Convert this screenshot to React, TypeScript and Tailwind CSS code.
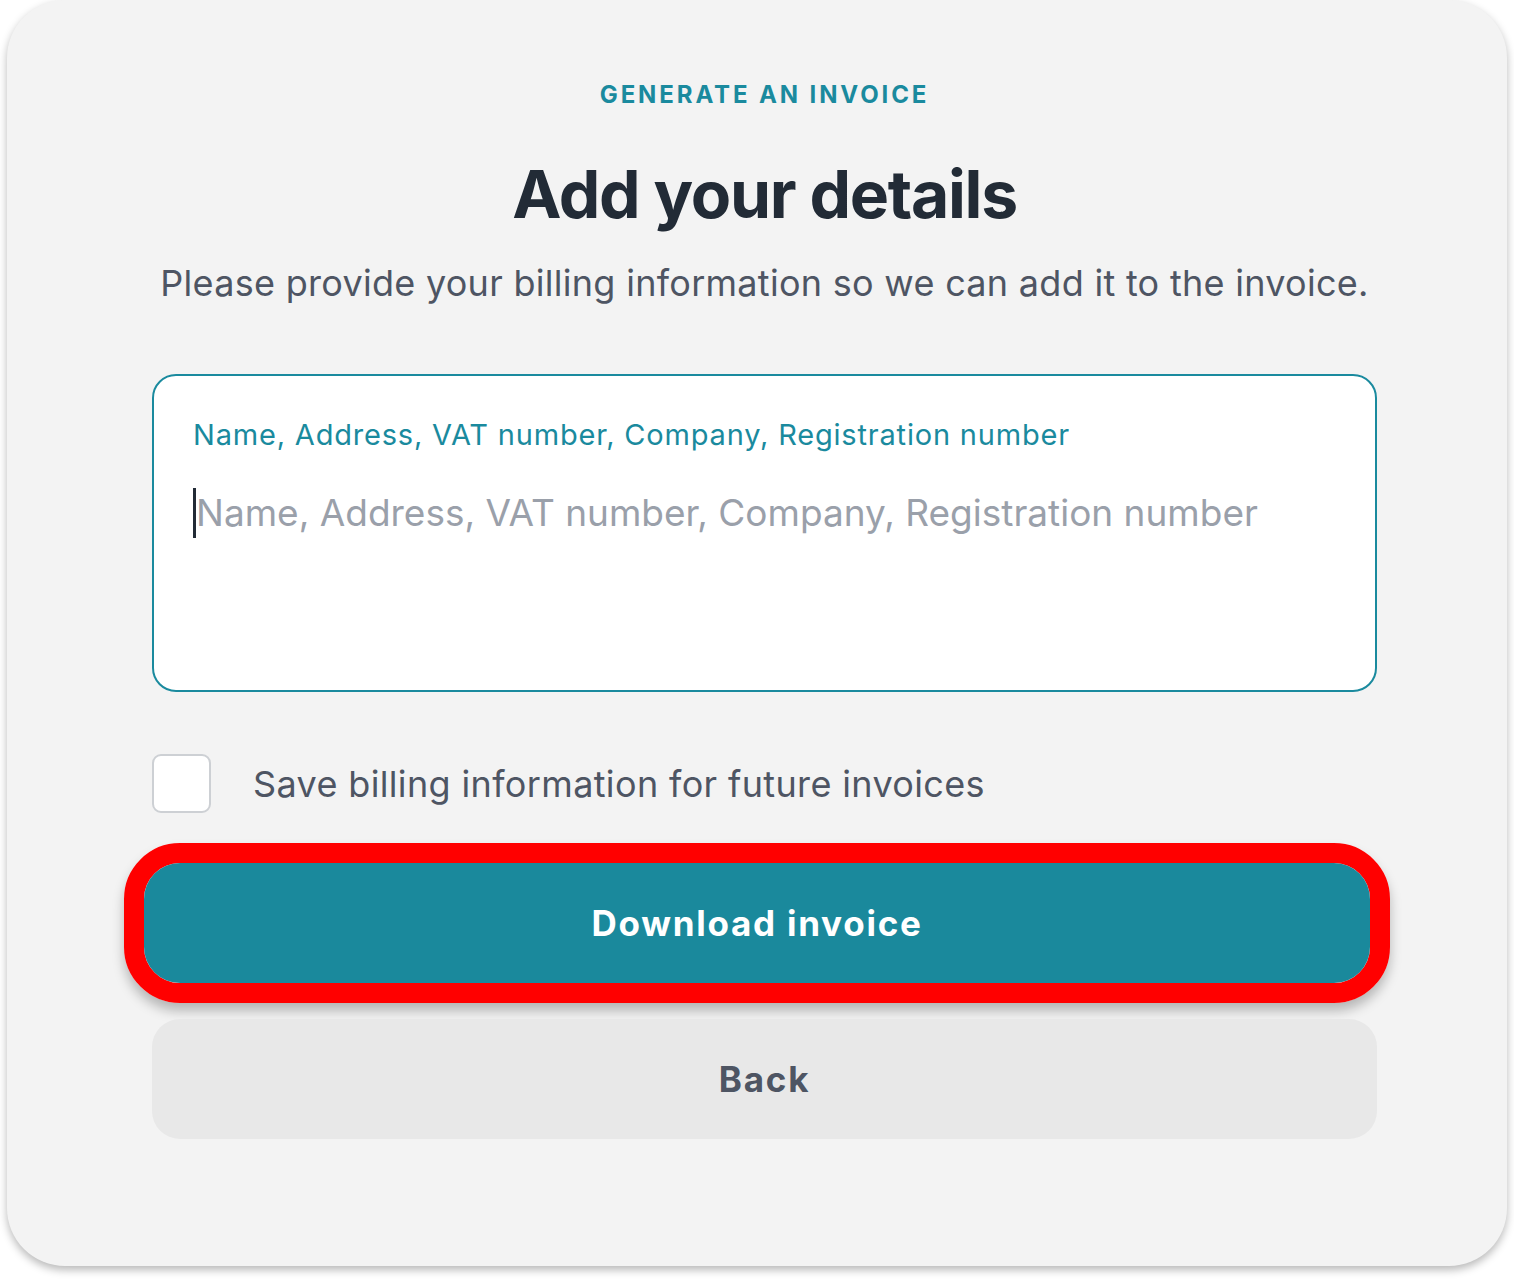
import React from "react";

export default function App() {
  return (
    <div className="w-[1514px] h-[1282px] bg-white relative overflow-hidden" style={{ fontFamily: "Inter, 'Noto Sans', sans-serif" }}>
      <div className="absolute left-[7px] top-0 w-[1500px] h-[1266px] bg-[#f3f3f3] rounded-[58px] shadow-[0_4px_8px_rgba(0,0,0,0.28)] pl-[145px] pr-[130px] pt-[80px] flex flex-col">
        <div className="text-center text-[#1a8a9e] font-bold text-[24px] tracking-[0.12em] leading-[30px]">GENERATE AN INVOICE</div>
        <h1 className="mt-[44px] text-center text-[#222b36] font-bold text-[66px] leading-[80px] tracking-[-0.02em]">Add your details</h1>
        <p className="mt-[27px] text-center text-[#4e5563] text-[36px] leading-[44px] tracking-[0.008em]">Please provide your billing information so we can add it to the invoice.</p>
        <div className="mt-[69px] h-[318px] bg-white border-2 border-[#1a8a9e] rounded-[24px] pl-[39px] pt-[41px]">
          <div className="text-[#1a8a9e] text-[29px] leading-[36px] tracking-[0.028em]">Name, Address, VAT number, Company, Registration number</div>
          <div className="mt-[35px] flex items-center">
            <div className="w-[3px] h-[50px] bg-[#222b36]"></div>
            <div className="text-[#9aa0aa] text-[37px] leading-[50px]">Name, Address, VAT number, Company, Registration number</div>
          </div>
        </div>
        <div className="mt-[62px] flex items-center">
          <div className="w-[59px] h-[59px] bg-white border-2 border-[#cdd0d4] rounded-[9px]"></div>
          <div className="ml-[42px] text-[#4e5563] text-[36px] leading-[44px] tracking-[0.01em]">Save billing information for future invoices</div>
        </div>
        <div className="mt-[30px] -ml-[28px] -mr-[13px] h-[160px] border-[20px] border-[#ff0000] rounded-[56px] shadow-[0_8px_12px_rgba(0,0,0,0.25)]">
          <div className="h-full bg-[#1a899c] rounded-[36px] flex items-center justify-center text-white font-bold text-[35px] tracking-[0.05em]">Download invoice</div>
        </div>
        <div className="mt-[16px] h-[120px] bg-[#e8e8e8] rounded-[28px] flex items-center justify-center text-[#4e5563] font-bold text-[35px] tracking-[0.05em]">Back</div>
      </div>
    </div>
  );
}
